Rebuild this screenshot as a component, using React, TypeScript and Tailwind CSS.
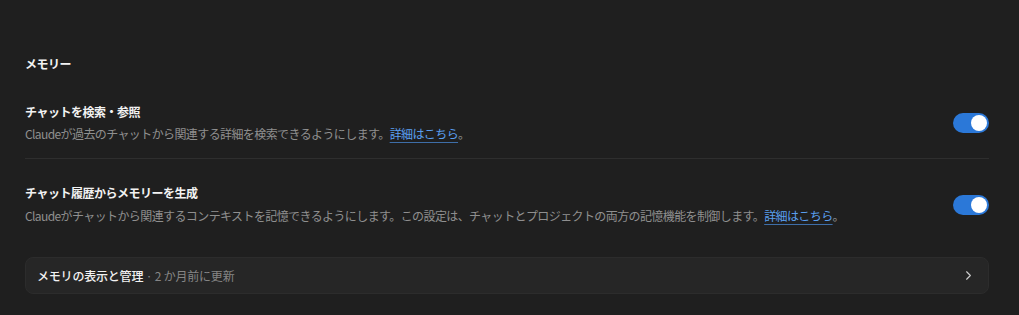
import { ChevronRight } from 'lucide-react';

function Toggle() {
  return (
    <div className="w-[36px] h-[20px] rounded-full bg-[#2b78d8] flex items-center justify-end px-[2px] shrink-0">
      <div className="w-[16px] h-[16px] rounded-full bg-white" />
    </div>
  );
}

function LearnMore() {
  return (
    <>
      <a className="text-[#5a9ff0] underline decoration-[#3e6ea8] underline-offset-[3px]">詳細はこちら</a>。
    </>
  );
}

export default function App() {
  return (
    <div
      className="w-full h-[315px] bg-[#1f1f1f] text-[#f2f2f2] px-[25px] pt-[54px]"
      style={{ fontFamily: '"Noto Sans CJK JP", "Noto Sans", sans-serif' }}
    >
      <div className="w-[964px]">
        <h2 className="text-[12px] font-bold leading-[20px] tracking-[-0.5px]">メモリー</h2>

        {/* Search chats */}
        <div className="flex items-center justify-between mt-[28px] pb-[14px] border-b border-[#2e2e2e]">
          <div>
            <div className="text-[12px] font-bold leading-[20px] tracking-[-0.5px]">チャットを検索・参照</div>
            <div className="mt-[2px] text-[12px] leading-[20px] text-[#8f8f8f] tracking-[-0.6px]">
              Claudeが過去のチャットから関連する詳細を検索できるようにします。<LearnMore />
            </div>
          </div>
          <Toggle />
        </div>

        {/* Generate memory */}
        <div className="flex items-center justify-between pt-[24px]">
          <div>
            <div className="text-[12px] font-bold leading-[20px] tracking-[-0.5px]">チャット履歴からメモリーを生成</div>
            <div className="mt-[3px] text-[12px] leading-[20px] text-[#8f8f8f] tracking-[-0.6px]">
              Claudeがチャットから関連するコンテキストを記憶できるようにします。この設定は、チャットとプロジェクトの両方の記憶機能を制御します。<LearnMore />
            </div>
          </div>
          <Toggle />
        </div>

        {/* Manage card */}
        <div className="mt-[31px] h-[37px] rounded-[8px] bg-[#262626] border border-[#2c2c2c] flex items-center justify-between pl-[11px] pr-[12px]">
          <div className="text-[12px] leading-[20px] tracking-[-0.2px]">
            <span className="font-medium text-[#f2f2f2]">メモリの表示と管理</span>
            <span className="text-[#858585]"> · 2 か月前に更新</span>
          </div>
          <ChevronRight className="w-[15px] h-[15px] text-[#cfcfcf]" strokeWidth={1.75} />
        </div>
      </div>
    </div>
  );
}
